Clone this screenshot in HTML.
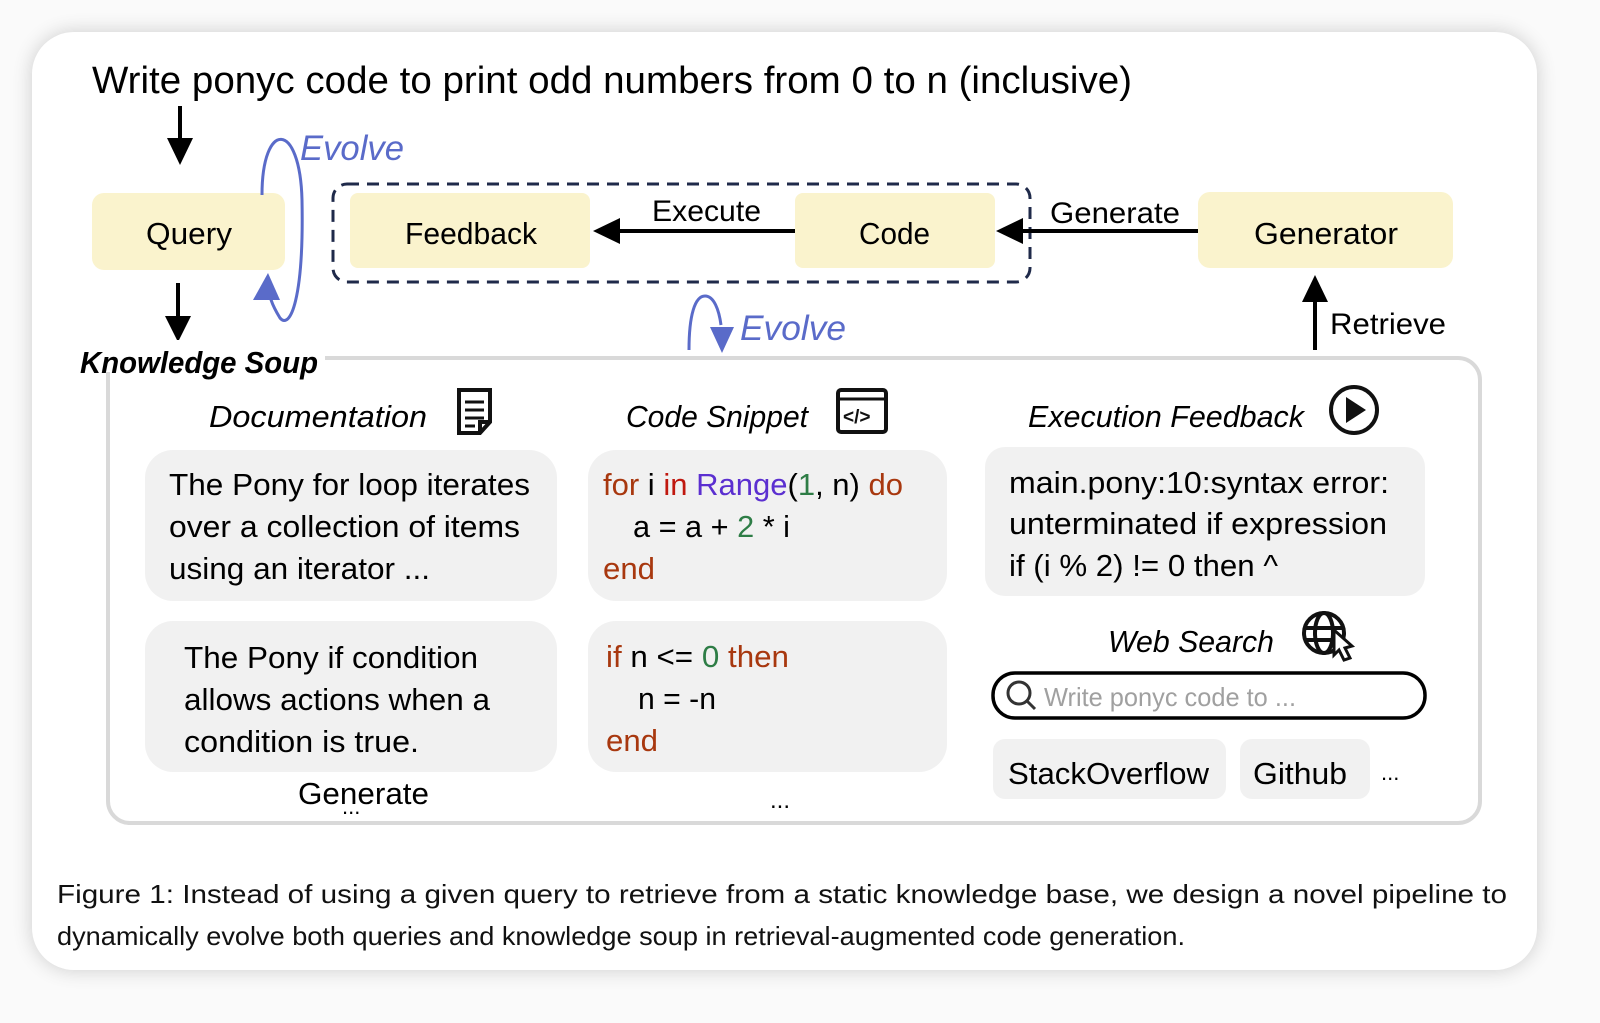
<!DOCTYPE html>
<html><head><meta charset="utf-8"><style>
html,body{margin:0;padding:0;background:#fff;overflow:hidden;width:1600px;height:1023px;}
svg{display:block;font-family:"Liberation Sans",sans-serif;}
</style></head><body>
<svg width="1600" height="1023" viewBox="0 0 1600 1023" xmlns="http://www.w3.org/2000/svg">
<defs>
<filter id="sh" x="-5%" y="-5%" width="110%" height="110%"><feGaussianBlur stdDeviation="10"/></filter>
</defs>
<rect width="1600" height="1023" fill="#fafafa"/>
<rect x="32" y="32" width="1505" height="938" rx="42" fill="#000" opacity="0.18" filter="url(#sh)"/>
<rect x="32" y="32" width="1505" height="938" rx="42" fill="#fff"/>

<text x="92" y="93" font-size="38" textLength="1040" lengthAdjust="spacingAndGlyphs">Write ponyc code to print odd numbers from 0 to n (inclusive)</text>

<line x1="180" y1="106" x2="180" y2="140" stroke="#000" stroke-width="4"/>
<path d="M167,138 L193,138 L180,165z" fill="#000"/>
<line x1="178" y1="283" x2="178" y2="318" stroke="#000" stroke-width="4"/>
<path d="M165,316 L191,316 L178,342z" fill="#000"/>

<rect x="92" y="193" width="193" height="77" rx="12" fill="#faf3cd"/>
<text x="146" y="244" font-size="31" textLength="86" lengthAdjust="spacingAndGlyphs">Query</text>
<path d="M262,195 C262,120 300,120 302,200 C304,300 290,330 280,318 C272,305 268,295 268,280" fill="none" stroke="#5a6bc9" stroke-width="3"/>
<path d="M253,300 L268,273 L280,300z" fill="#5a6bc9"/>
<text x="300" y="160" font-size="35" font-style="italic" fill="#5a6bc9" textLength="104" lengthAdjust="spacingAndGlyphs">Evolve</text>

<rect x="333" y="184" width="697" height="98" rx="14" fill="none" stroke="#1f2a4a" stroke-width="3" stroke-dasharray="12,8"/>
<rect x="350" y="193" width="240" height="75" rx="8" fill="#faf3cd"/>
<text x="405" y="244" font-size="31" textLength="132" lengthAdjust="spacingAndGlyphs">Feedback</text>
<line x1="795" y1="231" x2="615" y2="231" stroke="#000" stroke-width="4"/>
<path d="M620,218 L620,244 L593,231z" fill="#000"/>
<text x="652" y="221" font-size="30" textLength="109" lengthAdjust="spacingAndGlyphs">Execute</text>
<rect x="795" y="193" width="200" height="75" rx="8" fill="#faf3cd"/>
<text x="859" y="244" font-size="31" textLength="71" lengthAdjust="spacingAndGlyphs">Code</text>
<line x1="1198" y1="231" x2="1018" y2="231" stroke="#000" stroke-width="4"/>
<path d="M1023,218 L1023,244 L996,231z" fill="#000"/>
<text x="1050" y="223" font-size="30" textLength="130" lengthAdjust="spacingAndGlyphs">Generate</text>
<rect x="1198" y="192" width="255" height="76" rx="12" fill="#faf3cd"/>
<text x="1254" y="244" font-size="31" textLength="144" lengthAdjust="spacingAndGlyphs">Generator</text>

<line x1="1315" y1="350" x2="1315" y2="298" stroke="#000" stroke-width="4"/>
<path d="M1302,302 L1328,302 L1315,275z" fill="#000"/>
<text x="1330" y="334" font-size="30" textLength="116" lengthAdjust="spacingAndGlyphs">Retrieve</text>

<path d="M689,350 C689,315 695,296 705,296 C714,296 719,310 721,325" fill="none" stroke="#5a6bc9" stroke-width="3"/>
<path d="M710,327 L734,327 L722,353z" fill="#5a6bc9"/>
<text x="740" y="340" font-size="35" font-style="italic" fill="#5a6bc9" textLength="106" lengthAdjust="spacingAndGlyphs">Evolve</text>

<rect x="108" y="358" width="1372" height="465" rx="22" fill="none" stroke="#d9d9d9" stroke-width="4"/>
<rect x="70" y="340" width="255" height="45" fill="#fff"/>
<line x1="108" y1="372" x2="108" y2="400" stroke="#d9d9d9" stroke-width="4"/>
<text x="80" y="373" font-size="31" font-weight="bold" font-style="italic" textLength="238" lengthAdjust="spacingAndGlyphs">Knowledge Soup</text>

<text x="209" y="427" font-size="31" font-style="italic" textLength="218" lengthAdjust="spacingAndGlyphs">Documentation</text>
<g fill="none" stroke="#111" stroke-width="4">
<path d="M459,390 L490,390 L490,422 L480,433 L459,433 Z"/>
<path d="M480,433 L480,422 L490,422"/>
</g>
<g stroke="#111" stroke-width="3"><line x1="465" y1="402" x2="484" y2="402"/><line x1="465" y1="410" x2="484" y2="410"/><line x1="465" y1="418" x2="484" y2="418"/><line x1="465" y1="426" x2="475" y2="426"/></g>

<text x="626" y="427" font-size="31" font-style="italic" textLength="182" lengthAdjust="spacingAndGlyphs">Code Snippet</text>
<rect x="838" y="390" width="48" height="42" rx="3" fill="none" stroke="#111" stroke-width="4"/>
<line x1="838" y1="399" x2="886" y2="399" stroke="#111" stroke-width="3"/>
<text x="843" y="423" font-size="19" font-weight="bold" fill="#111">&lt;/&gt;</text>

<text x="1028" y="427" font-size="31" font-style="italic" textLength="276" lengthAdjust="spacingAndGlyphs">Execution Feedback</text>
<circle cx="1354" cy="410" r="23" fill="none" stroke="#111" stroke-width="4"/>
<path d="M1346,397 L1366,410 L1346,423z" fill="#111"/>

<rect x="145" y="450" width="412" height="151" rx="28" fill="#f1f1f1"/>
<g font-size="31">
<text x="169" y="495" textLength="361" lengthAdjust="spacingAndGlyphs">The Pony for loop iterates</text>
<text x="169" y="537" textLength="351" lengthAdjust="spacingAndGlyphs">over a collection of items</text>
<text x="169" y="579" textLength="261" lengthAdjust="spacingAndGlyphs">using an iterator ...</text>
</g>
<rect x="145" y="621" width="412" height="151" rx="28" fill="#f1f1f1"/>
<g font-size="31">
<text x="184" y="668" textLength="294" lengthAdjust="spacingAndGlyphs">The Pony if condition</text>
<text x="184" y="710" textLength="306" lengthAdjust="spacingAndGlyphs">allows actions when a</text>
<text x="184" y="752" textLength="235" lengthAdjust="spacingAndGlyphs">condition is true.</text>
</g>
<text x="298" y="804" font-size="31" textLength="131" lengthAdjust="spacingAndGlyphs">Generate</text>
<text x="342" y="814" font-size="22">...</text>

<rect x="588" y="450" width="359" height="151" rx="28" fill="#f1f1f1"/>
<g font-size="31">
<text x="603" y="495" textLength="300" lengthAdjust="spacingAndGlyphs"><tspan fill="#a8380f">for</tspan> i <tspan fill="#c0180f">in</tspan> <tspan fill="#5b2fd0">Range</tspan>(<tspan fill="#2e7d46">1</tspan>, n) <tspan fill="#a8380f">do</tspan></text>
<text x="633" y="537" textLength="157" lengthAdjust="spacingAndGlyphs">a = a + <tspan fill="#2e7d46">2</tspan> * i</text>
<text x="603" y="579" fill="#a8380f" textLength="52" lengthAdjust="spacingAndGlyphs">end</text>
</g>
<rect x="588" y="621" width="359" height="151" rx="28" fill="#f1f1f1"/>
<g font-size="31">
<text x="606" y="667" textLength="183" lengthAdjust="spacingAndGlyphs"><tspan fill="#a8380f">if</tspan> n &lt;= <tspan fill="#2e7d46">0</tspan> <tspan fill="#a8380f">then</tspan></text>
<text x="638" y="709" textLength="78" lengthAdjust="spacingAndGlyphs">n = -n</text>
<text x="606" y="751" fill="#a8380f" textLength="52" lengthAdjust="spacingAndGlyphs">end</text>
</g>
<text x="770" y="808" font-size="24">...</text>

<rect x="985" y="447" width="440" height="149" rx="20" fill="#f1f1f1"/>
<g font-size="31">
<text x="1009" y="493" textLength="380" lengthAdjust="spacingAndGlyphs">main.pony:10:syntax error:</text>
<text x="1009" y="534" textLength="378" lengthAdjust="spacingAndGlyphs">unterminated if expression</text>
<text x="1009" y="576" textLength="269" lengthAdjust="spacingAndGlyphs">if (i % 2) != 0 then ^</text>
</g>

<text x="1108" y="652" font-size="31" font-style="italic" textLength="166" lengthAdjust="spacingAndGlyphs">Web Search</text>
<g fill="none" stroke="#111" stroke-width="4">
<circle cx="1324" cy="633" r="20"/>
<ellipse cx="1324" cy="633" rx="9" ry="20"/>
<line x1="1304" y1="628" x2="1344" y2="628"/>
<line x1="1306" y1="640" x2="1334" y2="640"/>
</g>
<path d="M1334,630 L1352,646 L1345,648 L1350,658 L1344,660 L1339,650 L1334,655z" fill="#fff" stroke="#111" stroke-width="3"/>

<rect x="993" y="673" width="432" height="45" rx="22" fill="#fff" stroke="#000" stroke-width="3.5"/>
<circle cx="1019" cy="693" r="11" fill="none" stroke="#333" stroke-width="3"/>
<line x1="1027" y1="701" x2="1035" y2="709" stroke="#333" stroke-width="3"/>
<text x="1044" y="706" font-size="26" fill="#a0a0a0" textLength="252" lengthAdjust="spacingAndGlyphs">Write ponyc code to ...</text>

<rect x="993" y="739" width="233" height="60" rx="12" fill="#f1f1f1"/>
<text x="1008" y="784" font-size="31" textLength="201" lengthAdjust="spacingAndGlyphs">StackOverflow</text>
<rect x="1240" y="739" width="130" height="60" rx="12" fill="#f1f1f1"/>
<text x="1253" y="784" font-size="31" textLength="94" lengthAdjust="spacingAndGlyphs">Github</text>
<text x="1381" y="780" font-size="22">...</text>

<g font-size="26" fill="#111">
<text x="57" y="903" textLength="1450" lengthAdjust="spacingAndGlyphs">Figure 1: Instead  of  using  a  given  query  to  retrieve  from  a  static  knowledge  base,  we  design  a  novel  pipeline  to</text>
<text x="57" y="945" textLength="1128" lengthAdjust="spacingAndGlyphs">dynamically evolve both queries and knowledge soup in retrieval-augmented code generation.</text>
</g>
</svg>
</body></html>
